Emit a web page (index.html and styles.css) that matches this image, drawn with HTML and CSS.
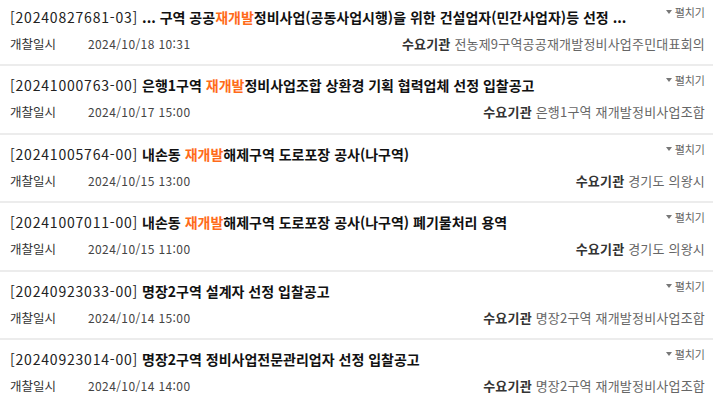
FILE: index.html
```html
<!DOCTYPE html>
<html lang="ko">
<head>
<meta charset="utf-8">
<link rel="stylesheet" href="styles.css">
</head>
<body>
<div class="list">
  <div class="row">
    <div class="top">
      <div class="title"><span class="no">[20240827681-03]</span> ... 구역 공공<span class="hl">재개발</span>정비사업(공동사업시행)을 위한 건설업자(민간사업자)등 선정 ...</div>
      <div class="toggle"><span class="tri"></span>펼치기</div>
    </div>
    <div class="bottom">
      <div class="date"><span class="lbl">개찰일시</span><span class="val">2024/10/18 10:31</span></div>
      <div class="org"><span class="olbl">수요기관</span> <span class="oval">전농제9구역공공재개발정비사업주민대표회의</span></div>
    </div>
  </div>
  <div class="row">
    <div class="top">
      <div class="title"><span class="no">[20241000763-00]</span> 은행1구역 <span class="hl">재개발</span>정비사업조합 상환경 기획 협력업체 선정 입찰공고</div>
      <div class="toggle"><span class="tri"></span>펼치기</div>
    </div>
    <div class="bottom">
      <div class="date"><span class="lbl">개찰일시</span><span class="val">2024/10/17 15:00</span></div>
      <div class="org"><span class="olbl">수요기관</span> <span class="oval">은행1구역 재개발정비사업조합</span></div>
    </div>
  </div>
  <div class="row">
    <div class="top">
      <div class="title"><span class="no">[20241005764-00]</span> 내손동 <span class="hl">재개발</span>해제구역 도로포장 공사(나구역)</div>
      <div class="toggle"><span class="tri"></span>펼치기</div>
    </div>
    <div class="bottom">
      <div class="date"><span class="lbl">개찰일시</span><span class="val">2024/10/15 13:00</span></div>
      <div class="org"><span class="olbl">수요기관</span> <span class="oval">경기도 의왕시</span></div>
    </div>
  </div>
  <div class="row">
    <div class="top">
      <div class="title"><span class="no">[20241007011-00]</span> 내손동 <span class="hl">재개발</span>해제구역 도로포장 공사(나구역) 폐기물처리 용역</div>
      <div class="toggle"><span class="tri"></span>펼치기</div>
    </div>
    <div class="bottom">
      <div class="date"><span class="lbl">개찰일시</span><span class="val">2024/10/15 11:00</span></div>
      <div class="org"><span class="olbl">수요기관</span> <span class="oval">경기도 의왕시</span></div>
    </div>
  </div>
  <div class="row">
    <div class="top">
      <div class="title"><span class="no">[20240923033-00]</span> 명장2구역 설계자 선정 입찰공고</div>
      <div class="toggle"><span class="tri"></span>펼치기</div>
    </div>
    <div class="bottom">
      <div class="date"><span class="lbl">개찰일시</span><span class="val">2024/10/14 15:00</span></div>
      <div class="org"><span class="olbl">수요기관</span> <span class="oval">명장2구역 재개발정비사업조합</span></div>
    </div>
  </div>
  <div class="row">
    <div class="top">
      <div class="title"><span class="no">[20240923014-00]</span> 명장2구역 정비사업전문관리업자 선정 입찰공고</div>
      <div class="toggle"><span class="tri"></span>펼치기</div>
    </div>
    <div class="bottom">
      <div class="date"><span class="lbl">개찰일시</span><span class="val">2024/10/14 14:00</span></div>
      <div class="org"><span class="olbl">수요기관</span> <span class="oval">명장2구역 재개발정비사업조합</span></div>
    </div>
  </div>
</div>
</body>
</html>
```
FILE: styles.css
```css
html, body {
  margin: 0;
  padding: 0;
  background: #fff;
}
body {
  font-family: "Noto Sans CJK KR", "Noto Sans", sans-serif;
  color: #222;
  overflow: hidden;
}
.list {
  margin-top: -2px;
}
.row {
  height: 66.4px;
  border-bottom: 2px solid #ececec;
  padding: 0 8px 0 10px;
  display: flex;
  flex-direction: column;
}
.top {
  display: flex;
  justify-content: space-between;
  align-items: flex-start;
  padding-top: 9px;
  height: 20px;
}
.title {
  font-size: 14px;
  line-height: 20px;
  font-weight: 600;
  color: #111;
  white-space: nowrap;
  overflow: hidden;
}
.no {
  font-weight: 400;
  color: #222;
  letter-spacing: 0.8px;
}
.hl {
  color: #ff6b1a;
}
.toggle {
  font-size: 11px;
  line-height: 14px;
  color: #666;
  margin-top: -2px;
  display: flex;
  align-items: center;
  white-space: nowrap;
}
.tri {
  width: 0;
  height: 0;
  border-left: 3.5px solid transparent;
  border-right: 3.5px solid transparent;
  border-top: 4px solid #777;
  margin-right: 3px;
}
.bottom {
  display: flex;
  justify-content: space-between;
  align-items: center;
  margin-top: 7px;
  height: 20px;
  font-size: 12px;
  line-height: 20px;
}
.lbl {
  display: inline-block;
  width: 78px;
  color: #333;
  font-size: 12.5px;
}
.val {
  color: #444;
  letter-spacing: 0.4px;
}
.org {
  font-size: 13px;
  letter-spacing: 0.2px;
}
.olbl {
  font-weight: 700;
  color: #333;
}
.oval {
  color: #666;
}
```
